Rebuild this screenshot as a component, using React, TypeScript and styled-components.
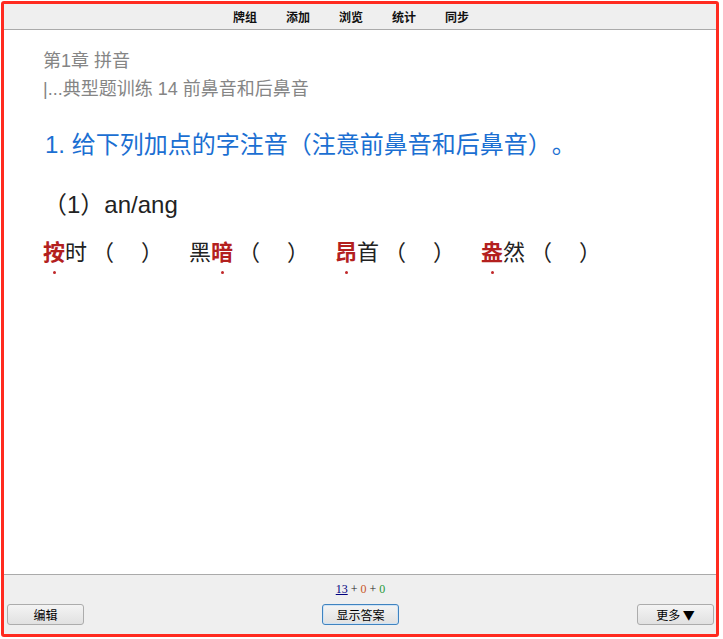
import styled, { createGlobalStyle } from "styled-components";

const GlobalStyle = createGlobalStyle`
  html, body {
    margin: 0;
    padding: 0;
    background: #ffffff;
  }
  #root {
    width: 723px;
    height: 639px;
  }
`;

const CJK = `"Liberation Sans", "Noto Sans CJK SC", sans-serif`;

const Page = styled.div`
  box-sizing: border-box;
  width: 723px;
  height: 639px;
  padding: 1px 4px 2px 1px;
`;

const Frame = styled.div`
  box-sizing: border-box;
  height: 100%;
  border: 3px solid #ff2a1f;
  border-radius: 3px;
  display: flex;
  flex-direction: column;
  overflow: hidden;
`;

const Toolbar = styled.div`
  height: 25px;
  background: #efefef;
  border-bottom: 1px solid #aaaaaa;
  display: flex;
  justify-content: center;
  align-items: center;
  padding-right: 18px;
`;

const MenuItem = styled.span`
  font-family: "Noto Sans CJK SC", sans-serif;
  font-weight: 700;
  font-size: 12px;
  color: #111;
  padding: 0 14.5px;
  line-height: 15px;
`;

const Content = styled.div`
  flex: 1;
  background: #fff;
  padding: 17px 39px 0;
  font-family: ${CJK};
  text-spacing-trim: space-all;
`;

const Crumb = styled.div`
  font-size: 18px;
  line-height: 28px;
  color: #858585;
`;

const Title = styled.div`
  margin-top: 25px;
  font-size: 24px;
  line-height: 34px;
  color: #1b6fd2;
  padding-left: 2px;
`;

const Sub = styled.div`
  margin-top: 26px;
  font-size: 24px;
  line-height: 34px;
  color: #222;
`;

const WordRow = styled.div`
  margin-top: 14px;
  display: flex;
  font-size: 22px;
  line-height: 34px;
  color: #222;
`;

const Word = styled.span`
  display: inline-flex;
  width: 146px;
`;

const Dotted = styled.span`
  position: relative;
  color: #b3201e;
  font-weight: 700;
  &::after {
    content: "";
    position: absolute;
    left: 50%;
    bottom: -4px;
    width: 3px;
    height: 3px;
    margin-left: -1.5px;
    border-radius: 50%;
    background: #c0282a;
  }
`;

const Paren = styled.span`
  padding-left: 5px;
`;

const Blank = styled.span`
  display: inline-block;
  width: 27px;
`;

const Footer = styled.div`
  background: #efefef;
  border-top: 1px solid #aaaaaa;
  padding: 7px 2px 9px 3px;
  display: flex;
  flex-direction: column;
  gap: 7px;
`;

const Counts = styled.div`
  text-align: center;
  font-family: "Liberation Serif", serif;
  font-size: 12px;
  line-height: 15px;
  color: #222;
`;

const Count = styled.span<{ $c: string; $u?: boolean }>`
  color: ${(p) => p.$c};
  text-decoration: ${(p) => (p.$u ? "underline" : "none")};
`;

const ButtonRow = styled.div`
  display: flex;
  justify-content: space-between;
  align-items: center;
`;

const Button = styled.button<{ $focus?: boolean }>`
  box-sizing: border-box;
  width: 77px;
  height: 21px;
  padding: 0;
  font-family: "Noto Sans CJK SC", sans-serif;
  font-size: 12px;
  line-height: 17px;
  color: #000;
  border: 1px solid ${(p) => (p.$focus ? "#3f83c0" : "#acacac")};
  border-radius: 3px;
  background: linear-gradient(#f4f4f4, #e1e1e1);
  box-shadow: ${(p) => (p.$focus ? "inset 0 0 0 1px #cfe3f5" : "none")};
`;

const menu = ["牌组", "添加", "浏览", "统计", "同步"];

const words: [string, string, boolean][] = [
  ["按", "时", true],
  ["黑", "暗", false],
  ["昂", "首", true],
  ["盎", "然", true],
];

export default function App() {
  return (
    <Page>
      <GlobalStyle />
      <Frame>
        <Toolbar>
          {menu.map((m) => (
            <MenuItem key={m}>{m}</MenuItem>
          ))}
        </Toolbar>
        <Content>
          <Crumb>第1章 拼音</Crumb>
          <Crumb>|...典型题训练 14 前鼻音和后鼻音</Crumb>
          <Title>1. 给下列加点的字注音（注意前鼻音和后鼻音）。</Title>
          <Sub>（1）an/ang</Sub>
          <WordRow>
            {words.map(([a, b, first]) => (
              <Word key={a + b}>
                {first ? <Dotted>{a}</Dotted> : a}
                {first ? b : <Dotted>{b}</Dotted>}
                <Paren>（</Paren>
                <Blank />）
              </Word>
            ))}
          </WordRow>
        </Content>
        <Footer>
          <Counts>
            <Count $c="#000080" $u>13</Count> + <Count $c="#c8562a">0</Count> +{" "}
            <Count $c="#1f9a3a">0</Count>
          </Counts>
          <ButtonRow>
            <Button>编辑</Button>
            <Button $focus>显示答案</Button>
            <Button>更多 ▼</Button>
          </ButtonRow>
        </Footer>
      </Frame>
    </Page>
  );
}
